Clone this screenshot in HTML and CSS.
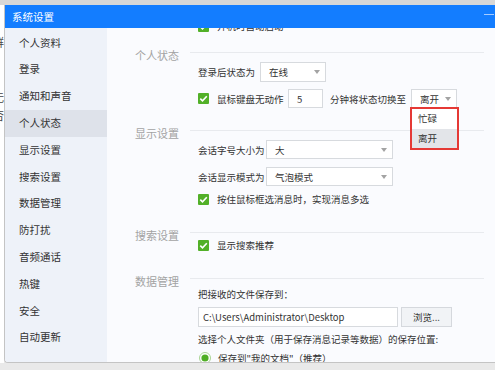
FILE: index.html
```html
<!DOCTYPE html>
<html>
<head>
<meta charset="utf-8">
<link rel="stylesheet" href="styles.css">
</head>
<body>
<div class="desk">
  <div class="edge">
    <span class="frag f1">群</span>
    <span class="frag f2">无</span>
    <span class="frag f3">否</span>
  </div>
  <div class="win">
    <div class="titlebar"><span class="title">系统设置</span><span class="min"></span></div>
    <div class="wbody">
      <nav class="side">
        <div class="item">个人资料</div>
        <div class="item">登录</div>
        <div class="item">通知和声音</div>
        <div class="item active">个人状态</div>
        <div class="item">显示设置</div>
        <div class="item">搜索设置</div>
        <div class="item">数据管理</div>
        <div class="item">防打扰</div>
        <div class="item">音频通话</div>
        <div class="item">热键</div>
        <div class="item">安全</div>
        <div class="item">自动更新</div>
      </nav>
      <div class="main">
        <div class="row row0">
          <svg class="cb" viewBox="0 0 11 11"><rect width="11" height="11" rx="1" fill="#52b028"/><path d="M2.3 5.6 L4.5 7.8 L8.8 3.2" fill="none" stroke="#fff" stroke-width="1.6"/></svg>
          <span class="txt">开机时自动启动</span>
        </div>

        <section class="sec">
          <div class="sec-label">个人状态</div>
          <div class="sec-body s1">
            <div class="row r20 m9">
              <span class="txt w62">登录后状态为</span>
              <div class="select w66"><span>在线</span><i class="arrow"></i></div>
            </div>
            <div class="row r19 m7">
              <svg class="cb" viewBox="0 0 11 11"><rect width="11" height="11" rx="1" fill="#52b028"/><path d="M2.3 5.6 L4.5 7.8 L8.8 3.2" fill="none" stroke="#fff" stroke-width="1.6"/></svg>
              <span class="txt w71">鼠标键盘无动作</span>
              <div class="input w35">5</div>
              <span class="txt w81 ml7">分钟将状态切换至</span>
              <div class="select w46 open"><span>离开</span><i class="arrow"></i>
                <div class="dropdown">
                  <div class="opt">忙碌</div>
                  <div class="opt hover">离开</div>
                </div>
              </div>
            </div>
          </div>
        </section>

        <section class="sec">
          <div class="sec-label">显示设置</div>
          <div class="sec-body s2">
            <div class="row r19 m9">
              <span class="txt w68">会话字号大小为</span>
              <div class="select w127"><span>大</span><i class="arrow"></i></div>
            </div>
            <div class="row r19 m8">
              <span class="txt w68">会话显示模式为</span>
              <div class="select w127"><span>气泡模式</span><i class="arrow"></i></div>
            </div>
            <div class="row m5">
              <svg class="cb" viewBox="0 0 11 11"><rect width="11" height="11" rx="1" fill="#52b028"/><path d="M2.3 5.6 L4.5 7.8 L8.8 3.2" fill="none" stroke="#fff" stroke-width="1.6"/></svg>
              <span class="txt">按住鼠标框选消息时，实现消息多选</span>
            </div>
          </div>
        </section>

        <section class="sec">
          <div class="sec-label">搜索设置</div>
          <div class="sec-body s3">
            <div class="row m4">
              <svg class="cb" viewBox="0 0 11 11"><rect width="11" height="11" rx="1" fill="#52b028"/><path d="M2.3 5.6 L4.5 7.8 L8.8 3.2" fill="none" stroke="#fff" stroke-width="1.6"/></svg>
              <span class="txt">显示搜索推荐</span>
            </div>
          </div>
        </section>

        <section class="sec">
          <div class="sec-label">数据管理</div>
          <div class="sec-body s4">
            <div class="row m7"><span class="txt">把接收的文件保存到：</span></div>
            <div class="row r20 m5">
              <div class="input path">C:\Users\Administrator\Desktop</div>
              <div class="btn">浏览...</div>
            </div>
            <div class="row m4"><span class="txt">选择个人文件夹（用于保存消息记录等数据）的保存位置:</span></div>
            <div class="row m3">
              <svg class="rb" viewBox="0 0 12 12"><circle cx="6" cy="6" r="5.5" fill="#fff" stroke="#a9d494"/><circle cx="6" cy="6" r="3.6" fill="#4fae25"/></svg>
              <span class="txt">保存到"我的文档"（推荐）</span>
            </div>
          </div>
        </section>
      </div>
    </div>
  </div>
</div>
</body>
</html>
```

FILE: styles.css
```css
* { box-sizing: border-box; }
html, body { margin: 0; padding: 0; }
body {
  width: 495px;
  height: 370px;
  overflow: hidden;
  background: #e9e9e9;
  font-family: "Noto Sans CJK SC", "Microsoft YaHei", sans-serif;
  color: #333;
}
.desk {
  display: flex;
  border-top: 5px solid #d7d7d7;
}
.edge {
  width: 4px;
  height: 358px;
  background: #fff;
  overflow: hidden;
  display: flex;
  flex-direction: column;
  align-items: flex-end;
}
.frag { font-size: 11px; line-height: 14px; white-space: nowrap; color: #444; }
.f1 { margin-top: 30px; }
.f2 { margin-top: 41px; }
.f3 { margin-top: 4px; }

.win {
  width: 491px;
  height: 358px;
  border-left: 1px solid #c4c4c4;
  border-bottom: 1px solid #c4c4c4;
  border-bottom-left-radius: 4px;
  overflow: hidden;
  display: flex;
  flex-direction: column;
  background: #fafbfe;
}
.titlebar {
  flex: none;
  height: 23px;
  background: #137dff;
  display: flex;
  align-items: center;
  padding-left: 7px;
}
.title { color: #fff; font-size: 10.5px; line-height: 14px; }
.min {
  margin-left: auto;
  margin-right: 1px;
  align-self: flex-start;
  margin-top: 9px;
  width: 10px;
  height: 1px;
  background: #a5cbff;
}
.wbody { flex: 1; display: flex; min-height: 0; }
.side {
  flex: none;
  width: 102px;
  background: #eef2f9;
  padding-top: 1.6px;
}
.item {
  height: 26.8px;
  line-height: 26.8px;
  padding-left: 14px;
  font-size: 10.5px;
  color: #333;
}
.item.active { background: #dee2ea; }

.main {
  flex: 1;
  overflow: hidden;
  font-size: 9.5px;
}
.row {
  display: flex;
  align-items: center;
  height: 16px;
  line-height: 14px;
  white-space: nowrap;
}
.row0 { margin-top: -10px; padding-left: 91px; }
.r20 { height: 20px; }
.r19 { height: 19px; }
.m3 { margin-top: 3px; }
.m4 { margin-top: 4px; }
.m5 { margin-top: 5px; }
.m7 { margin-top: 7px; }
.m8 { margin-top: 8px; }
.m9 { margin-top: 9px; }
.ml7 { margin-left: 7px; }
.w62 { width: 62px; }
.w68 { width: 68px; }
.w71 { width: 71px; }
.w81 { width: 81px; }
.w35 { width: 35px; }
.w46 { width: 46px; }
.w66 { width: 66px; }
.w127 { width: 127px; }

.cb { width: 11px; height: 11px; flex: none; margin-right: 8px; }
.rb { width: 12px; height: 12px; flex: none; margin-right: 7px; margin-left: 1px; }

.sec {
  display: grid;
  grid-template-columns: 55px 1fr;
  margin: 18px 11px 0 28px;
}
.sec + .sec { margin-top: 0; }
.sec-label {
  margin-top: -5px;
  font-size: 11px;
  line-height: 17px;
  color: #a3a3a3;
}
.sec-body {
  border-top: 1px solid #e8eaee;
  padding-left: 8px;
}
.s1 { padding-bottom: 22px; }
.s2 { padding-bottom: 25px; }
.s3 { padding-bottom: 25px; }

.select, .input {
  position: relative;
  flex: none;
  height: 100%;
  background: #fff;
  border: 1px solid #d7dade;
  display: flex;
  align-items: center;
  padding-left: 8px;
  color: #333;
}
.select.open { border-bottom-color: transparent; }
.arrow {
  position: absolute;
  right: 5px;
  top: 50%;
  margin-top: -2px;
  width: 0;
  height: 0;
  border-left: 3.5px solid transparent;
  border-right: 3.5px solid transparent;
  border-top: 4px solid #a3a3a3;
}
.dropdown {
  position: absolute;
  left: -2px;
  top: 100%;
  width: 49px;
  height: 43px;
  background: #fff;
  border: 2px solid #e53935;
  z-index: 2;
}
.opt {
  height: 19.5px;
  line-height: 19.5px;
  padding-left: 6px;
}
.opt.hover { background: #e3e5e9; }

.path { width: 200px; padding-left: 4px; }
.btn {
  flex: none;
  margin-left: 3px;
  width: 51px;
  height: 100%;
  border: 1px solid #d5d8dd;
  background: #f1f3f6;
  display: flex;
  align-items: center;
  justify-content: center;
  color: #333;
}
```
